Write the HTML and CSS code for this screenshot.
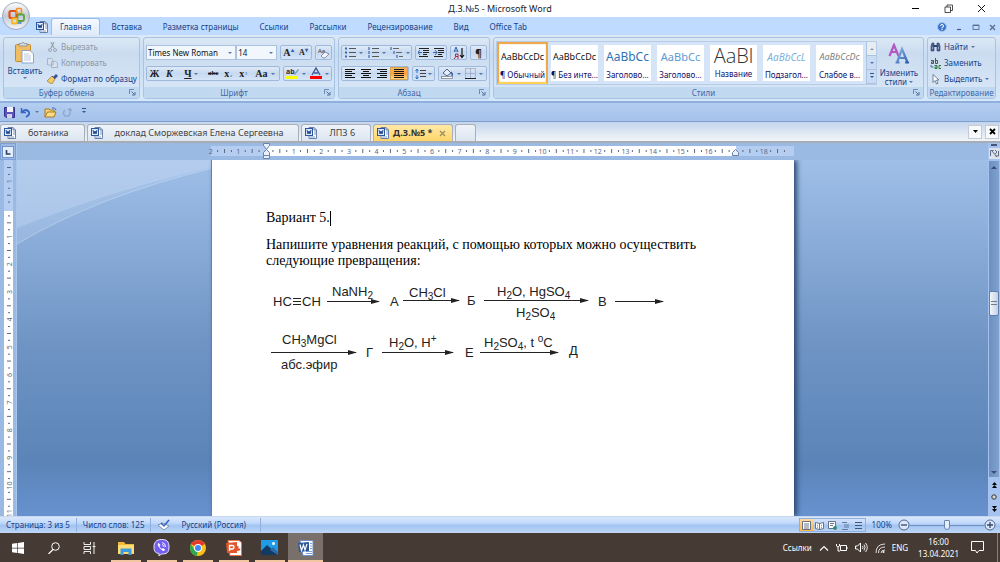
FILE: index.html
```html
<!DOCTYPE html>
<html lang="ru">
<head>
<meta charset="utf-8">
<title>Д.З.№5 - Microsoft Word</title>
<link rel="stylesheet" href="styles.css">
</head>
<body>
<svg class="defs" width="0" height="0">
  <defs>
    <linearGradient id="orb" x1="0" y1="0" x2="0" y2="1"><stop offset="0" stop-color="#fff"/><stop offset=".5" stop-color="#c3cad6"/><stop offset="1" stop-color="#f4f6fa"/></linearGradient>
    <linearGradient id="letter" x1="0" y1="0" x2="1" y2="1"><stop offset="0" stop-color="#8fb8ee"/><stop offset="1" stop-color="#2f5ca8"/></linearGradient>
  </defs>
  <symbol id="i-word" viewBox="0 0 12 12">
    <path d="M4 .5h5l2.500 2.500v8.500H4z" fill="#fff" stroke="#6a7fa8"/>
    <path d="M9 .5V3h2.500" fill="none" stroke="#6a7fa8"/>
    <path d="M9 5h2M9 7h2M5 10h5" stroke="#7c9bd0"/>
    <rect x=".5" y="1.500" width="7" height="7" fill="#dfe9fb" stroke="#2b579a"/>
    <path d="M2 3l1 4 1-3 1 3 1-4" fill="none" stroke="#1c4793"/>
  </symbol>
  <symbol id="i-launch" viewBox="0 0 7 7">
    <path d="M.5 5V.5H5" fill="none" stroke="#6c8cb8"/><path d="M2.500 2.500l3 3M6 3v3H3" fill="none" stroke="#4f719f"/>
  </symbol>
</svg>

<header class="titlebar">
  <h1>Д.З.№5 - Microsoft Word</h1>
  <div class="winbtns">
    <button aria-label="Свернуть"><svg width="9" height="9"><path d="M1 4.500h7" stroke="#000"/></svg></button>
    <button aria-label="Восстановить"><svg width="9" height="9"><path d="M1 3h5.500v5.500H1zM3 3V1h5.500v5.500h-2" fill="none" stroke="#222" stroke-width=".8"/></svg></button>
    <button aria-label="Закрыть"><svg width="9" height="9"><path d="M1 1l7 7M8 1l-7 7" stroke="#111"/></svg></button>
  </div>
</header>

<button class="orb" aria-label="Office">
  <svg viewBox="0 0 28 28">
    <circle cx="14" cy="14" r="13.500" fill="url(#orb)" stroke="#8d98ab" stroke-width=".8"/>
    <rect x="7.500" y="9" width="7" height="7" rx="1.500" fill="none" stroke="#e2501c" stroke-width="2.200"/>
    <rect x="14.500" y="6.500" width="5" height="5" rx="1" fill="none" stroke="#f0932b" stroke-width="1.600"/>
    <rect x="15.500" y="12.500" width="6.500" height="6.500" rx="1.500" fill="none" stroke="#5aa43c" stroke-width="1.800"/>
    <rect x="10" y="16.500" width="5" height="5" rx="1" fill="none" stroke="#f9b51c" stroke-width="1.800"/>
    <path d="M15.500 21h4" stroke="#3e7fc4" stroke-width="1.500"/>
  </svg>
</button>

<nav class="tabs">
  <svg class="wicon" width="12" height="12"><use href="#i-word"/></svg>
  <button class="on">Главная</button>
  <button>Вставка</button>
  <button>Разметка страницы</button>
  <button>Ссылки</button>
  <button>Рассылки</button>
  <button>Рецензирование</button>
  <button>Вид</button>
  <button>Office Tab</button>
  <div class="docbtns">
    <button aria-label="Справка"><svg width="10" height="10"><circle cx="5" cy="5" r="4.500" fill="#3b74cf" stroke="#aac4ea"/><path d="M3.500 4q0-1.500 1.500-1.500T6.500 4 5 5.500v1M5 7v1" fill="none" stroke="#fff"/></svg></button>
    <button aria-label="Свернуть окно"><svg width="7" height="8"><path d="M1 6.500h4" stroke="#44597c" stroke-width="1.200"/></svg></button>
    <button aria-label="Восстановить окно"><svg width="8" height="8"><path d="M1 2h6v4.500H1zM1 2.500h6" fill="none" stroke="#5a6c8a" stroke-width=".9"/></svg></button>
    <button aria-label="Закрыть окно"><svg width="7" height="8"><path d="M1 2l5 5M6 2L1 7" stroke="#5a6c8a" stroke-width="1.300"/></svg></button>
  </div>
</nav>

<section class="ribbon">
  <div class="group clip">
    <div class="body">
      <button class="paste">
        <svg width="22" height="24"><rect x="1.500" y="3.500" width="15" height="17" rx="1" fill="#efbd63" stroke="#c58a2c"/><path d="M5 5V2.500h2.500Q9 0 10.500 2.500H13V5z" fill="#d5d9df" stroke="#7a818c" stroke-width=".7"/><path d="M8 9.500h8l3.500 3.500v9H8z" fill="#fff" stroke="#8ea3c8"/><path d="M10 13h5M10 15h7M10 17h7M10 19h7" stroke="#a9bad8" stroke-width=".8"/></svg>
        <span>Вставить</span><i class="arr"></i>
      </button>
      <div class="side">
        <button class="dim"><svg width="11" height="10"><path d="M4 0l3 6M7 0L4 6" stroke="#98a3b3" stroke-width="1.200"/><circle cx="3" cy="8" r="1.500" fill="none" stroke="#98a3b3"/><circle cx="8" cy="8" r="1.500" fill="none" stroke="#98a3b3"/></svg>Вырезать</button>
        <button class="dim"><svg width="11" height="10"><path d="M.5.500h4L6 2v5H.5zM4.500 3.500h4L10.500 5v4.500h-6z" fill="#d7e0ee" stroke="#a6b4c9"/></svg>Копировать</button>
        <button><svg width="11" height="10"><path d="M6 3l3-3 2 2-3 3z" fill="#3c4fa0"/><path d="M0 7l5-5 3 3-3 5-2-1z" fill="#f3cd63" stroke="#8e6a20" stroke-width=".6"/><path d="M5 2l3 3" stroke="#555"/></svg>Формат по образцу</button>
      </div>
    </div>
    <footer>Буфер обмена<svg width="7" height="7"><use href="#i-launch"/></svg></footer>
  </div>

  <div class="group font">
    <div class="body rows">
      <div class="row">
        <label class="combo fname"><select aria-label="Шрифт"><option>Times New Roman</option></select><i class="arr"></i></label>
        <label class="combo fsize"><select aria-label="Размер"><option>14</option></select><i class="arr"></i></label>
        <div class="box">
          <button class="ser">A<sup>▴</sup></button><button class="ser small">A<sup>▾</sup></button>
        </div>
        <div class="box"><button aria-label="Очистить"><svg width="13" height="12"><text x="1" y="6" font-size="6" fill="#333">Aa</text><path d="M4 9l4-4 4 2-4 4H6z" fill="#f2f4fa" stroke="#6d7a99" stroke-width=".8"/></svg></button></div>
      </div>
      <div class="row">
        <div class="box bius">
          <button class="ser">Ж</button><button class="ser"><em>К</em></button><button class="ser wide"><u>Ч</u><i class="arr"></i></button><button class="ser tiny"><s>abc</s></button><button class="ser">x<sub>₂</sub></button><button class="ser">x<sub>²</sub></button><button class="ser wide">Aa<i class="arr"></i></button>
        </div>
        <div class="box colors">
          <button aria-label="Цвет выделения"><svg width="13" height="13"><text x="0" y="7" font-size="7" font-weight="700" fill="#333">ab</text><path d="M8 7l4-5 1 1-4 5z" fill="#8895b5"/><rect y="9" width="12" height="3" fill="#ff0"/></svg><i class="arr"></i></button>
          <button aria-label="Цвет текста"><svg width="12" height="13"><path d="M2 8l4-7 4 7M4 6h4" fill="none" stroke="#3c5a94" stroke-width="1.400"/><rect y="9" width="12" height="3" fill="#f00"/></svg><i class="arr"></i></button>
        </div>
      </div>
    </div>
    <footer>Шрифт<svg width="7" height="7"><use href="#i-launch"/></svg></footer>
  </div>

  <div class="group para">
    <div class="body rows">
      <div class="row">
        <div class="box lists">
          <button aria-label="Маркеры"><svg width="11" height="11"><path d="M0 1.500h2M0 5.500h2M0 9.500h2" stroke="#3a66b2" stroke-width="2"/><path d="M4 1.500h7M4 5.500h7M4 9.500h7" stroke="#555"/></svg><i class="arr"></i></button>
          <button aria-label="Нумерация"><svg width="11" height="11"><path d="M1 0v3M1 4v3M1 8v3" stroke="#3a66b2" stroke-width="1.200"/><path d="M4 1.500h7M4 5.500h7M4 9.500h7" stroke="#555"/></svg><i class="arr"></i></button>
          <button aria-label="Многоуровневый список"><svg width="13" height="12"><path d="M1 0v3M4 4v3M7 8v3" stroke="#3a66b2" stroke-width="1.200"/><path d="M3 1.500h6M6 5.500h6M9 9.500h4" stroke="#666"/></svg><i class="arr"></i></button>
        </div>
        <div class="box">
          <button aria-label="Уменьшить отступ"><svg width="12" height="11"><path d="M1 1.500h10M5 3.500h6M5 5.500h6M5 7.500h4M1 9.500h9" stroke="#222"/><path d="M0 5.500h4M2 3L0 5.500 2 8" fill="none" stroke="#3a66b2"/></svg></button>
          <button aria-label="Увеличить отступ"><svg width="12" height="11"><path d="M1 1.500h10M5 3.500h6M5 5.500h6M5 7.500h4M1 9.500h9" stroke="#222"/><path d="M0 5.500h4M2 3l2 2.500L2 8" fill="none" stroke="#3a66b2"/></svg></button>
        </div>
        <div class="box"><button aria-label="Сортировка"><svg width="12" height="12"><path d="M1 5l2-5 2 5M2 4h2" fill="none" stroke="#2f5fb0"/><path d="M5 12V7H2.500v2.500H5M3 9.500L1 12" fill="none" stroke="#a3283c"/><path d="M9 1v9M7 8l2 2.500L11 8" fill="none" stroke="#111" stroke-width="1.200"/></svg></button></div>
        <div class="box"><button class="pil">¶</button></div>
      </div>
      <div class="row">
        <div class="box aligns">
          <button aria-label="По левому краю"><svg width="12" height="11"><path d="M1 1.500h10M1 3.500h7M1 5.500h10M1 7.500h7M1 9.500h10" stroke="#111"/></svg></button>
          <button aria-label="По центру"><svg width="12" height="11"><path d="M1 1.500h10M3 3.500h6M1 5.500h10M3 7.500h6M1 9.500h10" stroke="#111"/></svg></button>
          <button aria-label="По правому краю"><svg width="12" height="11"><path d="M1 1.500h10M4 3.500h7M1 5.500h10M4 7.500h7M1 9.500h10" stroke="#111"/></svg></button>
          <button class="on" aria-label="По ширине"><svg width="12" height="11"><path d="M1 1.500h10M1 3.500h10M1 5.500h10M1 7.500h10M1 9.500h10" stroke="#111"/></svg></button>
        </div>
        <div class="box"><button class="spc" aria-label="Интервал"><svg width="11" height="12"><path d="M2 1v4M2 7v4M.5 3L2 1l1.500 2M.5 9L2 11l1.500-2" fill="none" stroke="#2f6fd0"/><path d="M5 2.500h6M5 5.500h6M5 8.500h6" stroke="#444"/></svg><i class="arr"></i></button></div>
        <div class="box colors">
          <button aria-label="Заливка"><svg width="13" height="13"><path d="M2 6l4-4 4 4-4 3z" fill="#e7eefb" stroke="#4c648f"/><path d="M10 5q2 2 1 4" fill="none" stroke="#2f5fb0" stroke-width="1.500"/><rect x=".5" y="9.500" width="11" height="2" fill="#fff" stroke="#7a8290" stroke-width=".8"/></svg><i class="arr"></i></button>
          <button aria-label="Границы"><svg width="11" height="11"><path d="M.5.500h10v10M.5.500v10M5.500.500v10M.5 5.500h10" fill="none" stroke="#8493ad" stroke-dasharray="1 1"/><path d="M0 10.500h11" stroke="#222"/></svg><i class="arr"></i></button>
        </div>
      </div>
    </div>
    <footer>Абзац<svg width="7" height="7"><use href="#i-launch"/></svg></footer>
  </div>

  <div class="group styles">
    <div class="body">
      <div class="gallery">
        <button class="on"><b class="s1">AaBbCcDc</b><span>¶ Обычный</span></button>
        <button><b class="s1">AaBbCcDc</b><span>¶ Без инте...</span></button>
        <button><b class="s2">AaBbCc</b><span>Заголово...</span></button>
        <button><b class="s3">AaBbCc</b><span>Заголово...</span></button>
        <button><b class="s4">AaBl</b><span>Название</span></button>
        <button><b class="s5">AaBbCcL</b><span>Подзагол...</span></button>
        <button><b class="s6">AaBbCcDc</b><span>Слабое в...</span></button>
        <div class="gscroll">
          <button class="off" aria-label="Вверх"><i class="arr up"></i></button>
          <button aria-label="Вниз"><i class="arr"></i></button>
          <button aria-label="Ещё"><i class="arr bar"></i></button>
        </div>
      </div>
      <button class="change">
        <svg width="22" height="21"><path d="M1.500 13L6 2l4.500 11M3 9h6" fill="none" stroke="#b357c2" stroke-width="2.200"/><path d="M9 19.500L14 6l5.500 13.500M11 15h7M7.500 19.500h4M17 19.500h4" fill="none" stroke="url(#letter)" stroke-width="2.200"/></svg>
        <span>Изменить<br>стили <i class="arr"></i></span>
      </button>
    </div>
    <footer>Стили<svg width="7" height="7"><use href="#i-launch"/></svg></footer>
  </div>

  <div class="group edit">
    <div class="body">
      <div class="side">
        <button><svg width="11" height="10"><path d="M1 9V4l1-3h2v8zM7 9V1h2l1 3v5z" fill="#49628f" stroke="#2d4270" stroke-width=".6"/><path d="M4 4h3" stroke="#2d4270" stroke-width="2"/><path d="M2 6h1M8 6h1" stroke="#dfe9f8"/></svg>Найти<i class="arr"></i></button>
        <button><svg width="11" height="11"><path d="M1 2.500h2.500v3H1.500v-1.500h2M5.500 0v5.500h2v-3h-2" fill="none" stroke="#444" stroke-width=".9"/><path d="M4.500 7.500H7v3H5v-1.500h2M11 7.500H9v3h2" fill="none" stroke="#2c7a35"/><path d="M1 7v2h2.500" fill="none" stroke="#3a66b2"/></svg>Заменить</button>
        <button><svg width="11" height="11"><path d="M3 .5v8l2-2 1.500 3.500 1.500-.7L6.500 6H9z" fill="#fff" stroke="#59667f" stroke-width=".8"/></svg>Выделить<i class="arr"></i></button>
      </div>
    </div>
    <footer>Редактирование</footer>
  </div>
</section>

<div class="qat">
  <button aria-label="Сохранить"><svg width="11" height="11"><path d="M.5.500h10v10H2L.5 9z" fill="#5a56b8" stroke="#34308a"/><path d="M3 0h6v5H3z" fill="#f0f3fb"/><path d="M3 7h5v4H3z" fill="#cdd3ea"/></svg></button>
  <button aria-label="Отменить"><svg width="11" height="11"><path d="M1.500 1v4.500h4.500" fill="none" stroke="#3765c4" stroke-width="1.500"/><path d="M2 5q4-4 7 0 1 3-3 5" fill="none" stroke="#3765c4" stroke-width="1.800"/></svg><i class="arr"></i></button>
  <button aria-label="Открыть"><svg width="13" height="11"><path d="M1 10V2h4l1 1h4v2" fill="#f5d37a" stroke="#a97a1e"/><path d="M1 10l2.500-5H12l-2 5z" fill="#fbdc88" stroke="#a97a1e"/><path d="M8 1q3-1 4 2" fill="none" stroke="#456cb5"/></svg></button>
  <button aria-label="Повторить"><svg width="10" height="11"><path d="M3 3Q0 6 3 9q5 1 5-3V2M6 3l2-1.500L9.500 4" fill="none" stroke="#8fa5c7" stroke-width="1.300"/></svg></button>
  <button aria-label="Настройка"><i class="arr bar"></i></button>
</div>

<div class="doctabs">
  <button><svg width="12" height="12"><use href="#i-word"/></svg>ботаника</button>
  <button><svg width="12" height="12"><use href="#i-word"/></svg>доклад Сморжевская Елена Сергеевна</button>
  <button><svg width="12" height="12"><use href="#i-word"/></svg>ЛПЗ 6</button>
  <button class="on"><svg width="12" height="12"><use href="#i-word"/></svg>Д.З.№5 *<svg width="7" height="7"><path d="M1 1l5 5M6 1L1 6" stroke="#9a8a62" stroke-width="1.200"/></svg></button>
  <button class="new" aria-label="Новый"></button>
  <div class="tabctl">
    <button aria-label="Список"><svg width="7" height="5"><path d="M1 1h5L3.500 4z" fill="#000"/></svg></button>
    <button aria-label="Закрыть вкладку"><svg width="7" height="7"><path d="M1 1l5 5M6 1L1 6" stroke="#000" stroke-width="1.800"/></svg></button>
  </div>
</div>

<main class="work">
  <div class="left">
    <button class="corner" aria-label="Табуляция"><svg width="12" height="12"><rect x=".5" y=".5" width="11" height="11" fill="#e5eefb" stroke="#6f93cf"/><path d="M4.500 4v4H8.500" fill="none" stroke="#2b3f66" stroke-width="1.600"/></svg></button>
    <svg class="vruler" id="vruler"></svg>
  </div>
  <div class="middle">
    <svg class="hruler" id="hruler" width="583" height="17"></svg>
    <div class="canvas">
      <svg class="swoosh" width="300" height="100"><path d="M0 68Q100 28 200 6T300-10H0z" fill="#c9dcf5" fill-opacity=".5"/><path d="M0 84Q80 36 200 7L196 6Q90 30 0 68z" fill="#c9dcf5" fill-opacity=".25"/><path d="M0 84Q80 36 200 7" fill="none" stroke="#c2d8f3" stroke-opacity=".6"/></svg>
      <article class="page">
        <p>Вариант 5.<span class="caret"></span></p>
        <p>Напишите уравнения реакций, с помощью которых можно осуществить следующие превращения:</p>
        <svg class="scheme" width="400" height="96" viewBox="0 0 400 96">
          <defs><marker id="head" markerUnits="userSpaceOnUse" markerWidth="10" markerHeight="6" refX="8" refY="3" orient="auto"><path d="M0 .5L9 3 0 5.500z"/></marker></defs>
          <g class="lines">
            <path d="M27 18.500h8M27 21.500h8M27 24.500h8"/>
            <path class="to" d="M61 21.500h52"/><path class="to" d="M137 20.500h56"/><path class="to" d="M218 20.500h104"/><path class="to" d="M349 21.500h48"/>
            <path class="to" d="M5 72.500h85"/><path class="to" d="M116 72.500h71"/><path class="to" d="M214 72.500h78"/>
          </g>
          <text x="7" y="26">HC</text><text x="36" y="26">CH</text>
          <text x="66" y="16">NaNH<tspan class="sub" dy="3">2</tspan></text>
          <text x="124" y="26">А</text>
          <text x="143" y="17">CH<tspan class="sub" dy="3">3</tspan><tspan dy="-3">Cl</tspan></text>
          <text x="201" y="25">Б</text>
          <text x="231" y="16">H<tspan class="sub" dy="3">2</tspan><tspan dy="-3">O, HgSO</tspan><tspan class="sub" dy="3">4</tspan></text>
          <text x="250" y="37">H<tspan class="sub" dy="3">2</tspan><tspan dy="-3">SO</tspan><tspan class="sub" dy="3">4</tspan></text>
          <text x="332" y="26">В</text>
          <text x="16" y="64">CH<tspan class="sub" dy="3">3</tspan><tspan dy="-3">MgCl</tspan></text>
          <text x="15" y="89">абс.эфир</text>
          <text x="100" y="77">Г</text>
          <text x="123" y="67">H<tspan class="sub" dy="3">2</tspan><tspan dy="-3">O, H</tspan><tspan class="sub" dy="-5">+</tspan></text>
          <text x="199" y="77">Е</text>
          <text x="218" y="67">H<tspan class="sub" dy="3">2</tspan><tspan dy="-3">SO</tspan><tspan class="sub" dy="3">4</tspan><tspan dy="-3">, t </tspan><tspan class="sub" dy="-5">o</tspan><tspan dy="5">C</tspan></text>
          <text x="303" y="75">Д</text>
        </svg>
      </article>
    </div>
  </div>
  <div class="scroll">
    <i class="split"></i>
    <button aria-label="Линейка"><svg width="11" height="11"><rect x="0" y="0" width="11" height="11" fill="#dce2ea"/><path d="M1.500 8V2.500h3M9.500 3v5h-3M3 3l5 6M6 2l2 2-2 2" fill="none" stroke="#626a86"/></svg></button>
    <div class="track">
      <i class="arr up"></i>
      <div class="before"></div>
      <div class="thumb"></div>
      <div class="after"></div>
      <i class="arr"></i>
    </div>
    <div class="jump">
      <button aria-label="Предыдущая"><svg width="5" height="6"><path d="M0 3l2.500-3L5 3zM0 6l2.500-3L5 6z"/></svg></button>
      <button aria-label="Объект"><svg width="6" height="6"><circle cx="3" cy="3" r="2.200" fill="#d8d8d8" stroke="#333"/></svg></button>
      <button aria-label="Следующая"><svg width="5" height="6"><path d="M0 0l2.500 3L5 0zM0 3l2.500 3L5 3z"/></svg></button>
    </div>
  </div>
</main>

<div class="status">
  <span>Страница: 3 из 5</span>
  <span>Число слов: 125</span>
  <span class="lang"><svg width="13" height="12"><path d="M1 6l5-2 6 3-5 4z" fill="#fff" stroke="#6b7a99" stroke-width=".8"/><path d="M4 4l3 3 5-6" fill="none" stroke="#2f62c0" stroke-width="1.500"/></svg>Русский (Россия)</span>
  <div class="views">
    <button class="on" aria-label="Разметка"><svg width="9" height="9"><path d="M.5.500h8v8h-8zM2 3h5M2 5h5M2 7h5" fill="#fff" stroke="#5a6478" stroke-width=".9"/></svg></button>
    <button aria-label="Чтение"><svg width="9" height="9"><path d="M.5 1.500l4 1 4-1v6l-4 1-4-1zM4.500 2.500v6M2 4l1 .5M2 6l1 .5M6 4.500L7 4M6 6.500L7 6" fill="#fff" stroke="#4b556c" stroke-width=".8"/></svg></button>
    <button aria-label="Веб"><svg width="9" height="9"><path d="M.5.500h7v7h-7zM2 2.500h4M2 4.500h3" fill="#fff" stroke="#5a6478" stroke-width=".9"/><circle cx="7" cy="7" r="2" fill="#31906f"/></svg></button>
    <button aria-label="Структура"><svg width="9" height="9"><path d="M1 1.500h5M3 4h5M3 6h5M1 8.500h6" stroke="#5a6f98" stroke-width=".9"/></svg></button>
    <button aria-label="Черновик"><svg width="9" height="9"><path d="M1 1.500h7M1 4.500h7M1 7.500h7" stroke="#44557a"/></svg></button>
  </div>
  <span class="pct">100%</span>
  <div class="zoom">
    <button aria-label="Меньше"><svg width="12" height="12"><circle cx="6" cy="6" r="5" fill="#dce8fa" stroke="#51678f"/><path d="M3 6h6" stroke="#33456a" stroke-width="1.300"/></svg></button>
    <input type="range" min="0" max="100" value="50" aria-label="Масштаб">
    <button aria-label="Больше"><svg width="12" height="12"><circle cx="6" cy="6" r="5" fill="#dce8fa" stroke="#51678f"/><path d="M3 6h6M6 3v6" stroke="#33456a" stroke-width="1.300"/></svg></button>
  </div>
</div>

<div class="taskbar">
  <button aria-label="Пуск"><svg width="12" height="12"><path d="M0 1.800L5.300 1v4.700H0zM6 .9L12 0v5.700H6zM0 6.400h5.300v4.700L0 10.300zM6 6.400h6V12l-6-.9z" fill="#fff"/></svg></button>
  <button aria-label="Поиск"><svg width="12" height="12"><circle cx="7.500" cy="4.500" r="3.800" fill="none" stroke="#fff"/><path d="M5 7.500L.5 12" stroke="#fff" stroke-width="1.200"/></svg></button>
  <button aria-label="Задачи"><svg width="13" height="12"><path d="M1 0v2.500h6.500V0M1 12V9.500h6.500V12M1 4.500h6.500v3H1zM11 0v12M9.500 4.500h3" fill="none" stroke="#eee"/></svg></button>
  <button class="run" aria-label="Проводник"><svg width="16" height="14"><path d="M0 1h6l1.500 2H16v10H0z" fill="#f3b93c"/><path d="M0 4h16v9H0z" fill="#fcdc74"/><path d="M2.500 14V7.500h11V14h-3v-3h-5v3z" fill="#3f9be0"/></svg></button>
  <button class="run" aria-label="Viber"><svg width="17" height="17"><path d="M8.500.500c5 0 7.500 1.500 7.500 7.500s-2.500 7-7.500 7L6 17v-2.500C2.500 14 1 12.500 1 8S3 .5 8.500.500z" fill="#7360f2" stroke="#e9e6ff"/><path d="M5.500 4q-1.500 1 0 3.500T10 12q1.500 0 2-1.500L10 9l-1 1Q7 9 6.500 7l1-1z" fill="#fff"/><path d="M9 3.500Q12.500 4 12.500 8M9 5.500Q11 6 11 8" fill="none" stroke="#fff" stroke-width=".9"/></svg></button>
  <button class="run" aria-label="Chrome"><svg width="16" height="16"><circle cx="8" cy="8" r="8" fill="#fbc116"/><path d="M8 8L1.100 4A8 8 0 0 1 14.900 4z" fill="#e33b2e"/><path d="M1.100 4L4.500 10l3 1L7 16A8 8 0 0 1 1.100 4z" fill="#2da94f"/><circle cx="8" cy="8" r="3.900" fill="#fff"/><circle cx="8" cy="8" r="3" fill="#4285f4"/></svg></button>
  <button class="run" aria-label="PowerPoint"><svg width="18" height="16"><path d="M3 .5h11l2.500 2v13H5z" fill="#fff" stroke="#e8744a"/><path d="M1 3l11-1v11L2 13z" fill="#e0552b"/><path d="M4.500 11V5.500h3q1.500 0 1.500 1.600T7.500 9h-3" fill="none" stroke="#fff" stroke-width="1.400"/><path d="M13.500 6a2.500 2.500 0 1 0 2 2.500h-2z" fill="#e0552b"/></svg></button>
  <button class="run" aria-label="Фотографии"><svg width="17" height="15"><path d="M0 0h17v15H0z" fill="#1f9be8"/><path d="M0 11l6-6 11 10H0z" fill="#123a63"/><path d="M9 10l3-3 5 5v3z" fill="#2b6da8"/><circle cx="12.500" cy="3.500" r="1.500" fill="#fff"/></svg></button>
  <button class="run on" aria-label="Word"><svg width="18" height="16"><path d="M3 .5h13v15H6z" fill="#fff" stroke="#6f8fca"/><path d="M13 3.500h2M13 6h2M13 8.500h2M9 13.500h6M9 11.500h6" stroke="#7fa0d8"/><path d="M1 3l11-1v9L2 12z" fill="#2b579a"/><path d="M3 4.500l1.500 6L6.500 5l1.500 5 2-6" fill="none" stroke="#fff" stroke-width="1.200"/></svg></button>
  <div class="tray">
    <span>Ссылки</span>
    <svg width="10" height="8"><path d="M1 6.500l4-4 4 4" fill="none" stroke="#fff" stroke-width="1.100"/></svg>
    <svg width="12" height="10"><path d="M4.500 2.500h6v5h-6zM11 4v2" fill="none" stroke="#fff"/><path d="M.5 1v2q1.500 2 3 0V1M2 4v4h2" fill="none" stroke="#fff"/></svg>
    <svg width="13" height="11"><path d="M.5 4h2L5.500 1v9l-3-3h-2z" fill="none" stroke="#fff"/><path d="M7.500 4q1 1.500 0 3M9 2.500q2 3 0 6M10.500 1q3.500 4.500 0 9" fill="none" stroke="#fff" stroke-width=".9"/></svg>
    <svg width="10" height="10"><path d="M1 10Q1 1 10 1M3.500 10Q3.500 4 10 4M6 10Q6 7 10 7" fill="none" stroke="#ddd"/><circle cx="8.500" cy="9" r="1" fill="#fff"/></svg>
    <span>ENG</span>
    <time>16:00<br>13.04.2021</time>
    <svg width="13" height="13"><path d="M.5.500h12v9H8L6 12 4.500 9.500h-4z" fill="none" stroke="#fff"/></svg>
  </div>
</div>

<script>
// one centimetre on the rulers, in px
const cm = 27.65;

const drawRuler = (svg, from, to, zero, vertical) => {
    let out = '';
    for (let q = from * 4; q <= to * 4; q++) {
        const p = zero + (q / 4) * cm;
        const pos = vertical ? `translate(5 ${p}) rotate(-90)` : `translate(${p} 8)`;
        if (q === 0) continue;
        if (q % 4 === 0) {
            if (!vertical && q / 4 === 17) continue;
            out += `<text transform="${pos}" y="3" text-anchor="middle">${Math.abs(q / 4)}</text>`;
        } else if (q % 2 === 0) {
            out += `<path transform="${pos}" d="M0-2v4"/>`;
        } else {
            out += `<path transform="${pos}" d="M0-1v2"/>`;
        }
    }
    svg.innerHTML += out;
};

const hruler = document.querySelector('#hruler');
hruler.innerHTML = '<rect class="margin" x="0" y="3" width="583" height="10"/><rect class="paper" x="55" y="3" width="470" height="10"/>';
drawRuler(hruler, -2, 18.75, 55, false);
hruler.innerHTML += '<g class="mark"><path d="M52.500.500h6v2l-3 4-3-4z"/><path d="M52.500 12.500v-3l3-3 3 3v3z"/><path d="M52.500 12.500h6v3h-6z"/><path d="M521.500 12.500v-3l3-3 3 3v3z"/></g>';

const vruler = document.querySelector('#vruler');
const vcm = Math.floor((vruler.clientHeight - 49) / cm);
vruler.innerHTML = '<rect class="margin" x="0" y="0" width="9" height="51"/><rect class="paper" x="0" y="51" width="9" height="2000"/>';
drawRuler(vruler, -1.5, vcm, 49, true);
</script>
</body>
</html>
```
FILE: styles.css
```css
* {
    box-sizing: border-box;
}

body {
    margin: 0;
    height: 100vh;
    display: flex;
    flex-direction: column;
    overflow: hidden;
    position: relative;
    font: 8px/12px "Noto Sans", sans-serif;
    color: #15428b;
    background: #fff;
}

button {
    margin: 0;
    padding: 0;
    border: 0;
    background: none;
    font: inherit;
    color: inherit;
    display: flex;
    align-items: center;
    justify-content: center;
    white-space: nowrap;
}

svg {
    flex: none;
    display: block;
}

.defs {
    position: absolute;
}

/* small drop-down triangle */
.arr {
    flex: none;
    display: inline-block;
    border: 2px solid transparent;
    border-top-color: #5577a8;
    border-bottom-width: 0;
}

.arr.up {
    border: 2px solid transparent;
    border-bottom-color: #8b99ad;
    border-top-width: 0;
}

/* the same with a line above it */
.arr.bar {
    border-top-color: #35538a;
    position: relative;
}

.arr.bar::before {
    content: "";
    position: absolute;
    left: -2px;
    top: -5px;
    width: 4px;
    height: 1px;
    background: #35538a;
}

/* title */
.titlebar {
    height: 17px;
    flex: none;
    display: flex;
    align-items: center;
    justify-content: center;
}

h1 {
    margin: 0;
    font-size: 9px;
    font-weight: 400;
    color: #222;
}

.winbtns {
    position: absolute;
    right: 14px;
    top: 4px;
    display: flex;
    gap: 24px;
}

.orb {
    position: absolute;
    left: 2px;
    top: 2px;
    z-index: 2;
}

.orb svg {
    width: 28px;
    height: 28px;
}

/* ribbon tabs */
.tabs {
    height: 18px;
    flex: none;
    display: flex;
    align-items: stretch;
    background: #bfdbff;
    padding: 1px 4px 0 36px;
}

.tabs .wicon {
    align-self: center;
    margin-right: 3px;
}

.tabs > button {
    padding: 0 10px 0 11px;
}

.tabs > .on {
    padding: 0 8px;
    border: 1px solid #9cbde9;
    border-bottom: 0;
    border-radius: 3px 3px 0 0;
    background: linear-gradient(#f5f9ff, #dfeafa);
}

.docbtns {
    margin-left: auto;
    display: flex;
    align-items: center;
    gap: 9px;
}

/* ribbon */
.ribbon {
    flex: none;
    display: flex;
    gap: 3px;
    padding: 2px 4px 2px 3px;
    background: linear-gradient(#dce8f7, #c7dbf3 30%, #d5e8fb);
    border-bottom: 2px solid #8fb0dc;
}

.group {
    flex: none;
    display: flex;
    flex-direction: column;
    border: 1px solid #a9c3e3;
    border-radius: 3px;
    background: linear-gradient(#dce8f5, #cbdcf0 25%, #d9e8f8);
    overflow: hidden;
}

.group .body {
    height: 49px;
    display: flex;
    padding: 3px 2px 0;
}

.group footer {
    height: 11px;
    line-height: 11px;
    display: flex;
    align-items: center;
    justify-content: center;
    position: relative;
    padding-right: 10px;
    background: #c1d8f1;
    color: #3f6ba8;
}

.group footer svg {
    position: absolute;
    right: 3px;
    top: 2px;
}

.clip {
    width: 137px;
}

.font {
    width: 192px;
}

.para {
    width: 152px;
}

.styles {
    flex: 1;
    min-width: 0;
}

.edit {
    width: 69px;
}

.group.edit footer {
    padding: 0;
}

.group .paste {
    flex-direction: column;
    justify-content: flex-start;
    width: 38px;
}

.side {
    display: flex;
    flex-direction: column;
    align-items: flex-start;
    justify-content: space-between;
    height: 44px;
}

.clip .side {
    margin-left: 3px;
}

.side button {
    gap: 3px;
    height: 12px;
}

.dim {
    color: #8d97a6;
}

.group .rows {
    flex-direction: column;
    gap: 6px;
    padding-top: 7px;
}

.row {
    display: flex;
    gap: 3px;
}

.combo {
    display: flex;
    align-items: center;
    position: relative;
    height: 15px;
    border: 1px solid #abc1de;
    background: #f2f7fd;
}

.combo + .combo {
    margin-left: -3px;
}

.combo select {
    appearance: none;
    width: 100%;
    border: 0;
    padding: 0 1px;
    background: none;
    font: inherit;
    color: #111;
}

.combo .arr {
    position: absolute;
    right: 3px;
}

.fname {
    width: 91px;
}

.fsize {
    width: 41px;
}

.box {
    display: flex;
    height: 15px;
    border: 1px solid #9fb9dc;
    border-radius: 2px;
    background: linear-gradient(#dfeaf8, #c6d9f0 50%, #d5e5f8);
    color: #222;
}

.box button {
    min-width: 15px;
    flex: 1;
    gap: 3px;
}

.box .ser {
    font: bold 10px/13px "Liberation Serif", serif;
}

.box .small {
    font-size: 8px;
}

.box .tiny {
    font-size: 7px;
}

.box .wide {
    flex: 1 1 24px;
}

.ser sup,
.ser sub {
    font-size: 6px;
    line-height: 6px;
    color: #2a5aa8;
}

.ser sub {
    margin-left: -2px;
}

.ser sup {
    margin: -6px 0 0 -3px;
}

.bius {
    width: 135px;
}

.colors {
    width: 49px;
}

.lists {
    width: 73px;
}

.aligns {
    width: 69px;
}

.box .spc {
    width: 21px;
    gap: 2px;
}

.box .pil {
    font-size: 10px;
    font-weight: 700;
}

.aligns .on {
    border: 1px solid #d8a24a;
    background: linear-gradient(#f6b867, #ff9f38 50%, #ffd98a);
}

/* style gallery */
.gallery {
    display: flex;
    flex: 1;
    min-width: 0;
    height: 44px;
    border: 1px solid #b5cbe8;
    background: #d5e5f7;
}

.gallery > button {
    flex: 1;
    min-width: 0;
    flex-direction: column;
    margin: 3px;
    padding-bottom: 1px;
    background: #fff;
    color: #0e0e6b;
    justify-content: space-between;
}

.gallery > .on {
    flex-grow: 1;
    margin: 0;
    padding: 1px 0 2px;
    border: 2px solid #f0a94a;
    border-bottom-color: #ffd257;
    box-shadow: inset 0 0 1px #c78a36;
}

.gallery b {
    font-weight: 400;
    height: 24px;
    line-height: 24px;
    color: #111;
}

.gallery .s1 {
    font-size: 9px;
}

.gallery .s2 {
    font-size: 12px;
    color: #2e74b5;
}

.gallery .s3 {
    font-size: 11px;
    color: #5b9bd5;
}

.gallery .s4 {
    font: 300 20px/22px "Open Sans", sans-serif;
    color: #333;
}

.gallery .s5 {
    font-size: 10px;
    font-style: italic;
    color: #7fb0de;
}

.gallery .s6 {
    font-size: 9px;
    font-style: italic;
    color: #808080;
}

.gscroll {
    width: 10px;
    display: flex;
    flex-direction: column;
    border-left: 1px solid #a9c3e3;
}

.gscroll button {
    flex: 1;
    border-bottom: 1px solid #a9c3e3;
    background: #c9dcf4;
}

.gscroll .off {
    background: #e8edf2;
}

.group .change {
    width: 44px;
    flex-direction: column;
    line-height: 9px;
    gap: 4px;
}

.change .arr {
    vertical-align: middle;
}

/* quick access */
.qat {
    height: 19px;
    flex: none;
    display: flex;
    align-items: center;
    gap: 5px;
    padding-left: 4px;
    background: linear-gradient(#b4cdf0, #a5c2ea);
    border-bottom: 1px solid #7e9fce;
}

.qat button {
    gap: 4px;
}

.qat button:last-child {
    margin-left: 5px;
}

/* document tabs */
.doctabs {
    height: 21px;
    flex: none;
    display: flex;
    align-items: flex-end;
    gap: 2px;
    padding-right: 1px;
    background: linear-gradient(#c3d5ec, #f2f5f9);
    border-bottom: 2px solid #a8adb5;
    font-size: 9px;
    color: #444;
}

.doctabs > button {
    height: 17px;
    padding: 0 15px 0 3px;
    gap: 12px;
    border: 1px solid #a9b0ba;
    border-bottom: 0;
    border-radius: 3px 3px 0 0;
    background: linear-gradient(#eef3f9, #dde6f0);
}

.doctabs > .on {
    padding-right: 6px;
    gap: 4px;
    font-weight: 700;
    color: #333;
    background: linear-gradient(#ffe9a8, #ffd568);
}

.doctabs .on svg + svg {
    margin-left: 3px;
}

.doctabs > .new {
    width: 21px;
    padding: 0;
}

.tabctl {
    margin-left: auto;
    display: flex;
    gap: 3px;
    align-self: center;
}

.tabctl button {
    width: 14px;
    height: 14px;
    border: 1px solid #c5cbd3;
    background: #f7f9fb;
}

/* work area */
.work {
    flex: 1;
    min-height: 0;
    display: flex;
    background: #9bbae3;
}

.left {
    width: 17px;
    flex: none;
    display: flex;
    flex-direction: column;
    border-right: 1px solid #a9c6ec;
}

.corner {
    height: 17px;
    flex: none;
    border: 1px solid #7d9fd4;
}

.vruler {
    flex: 1;
    min-height: 0;
    width: 9px;
    margin-left: 4px;
}

.hruler {
    overflow: visible;
}

.hruler text,
.vruler text {
    font-size: 7px;
    fill: #5c6a80;
}

.hruler path,
.vruler path {
    stroke: #5c6a80;
}

.margin {
    fill: #b5cdf0;
}

.paper {
    fill: #fff;
}

.hruler .mark path {
    fill: #e9f0fb;
    stroke: #6a83ab;
}

.middle {
    flex: 1;
    min-width: 0;
    display: flex;
    flex-direction: column;
    align-items: center;
}

.canvas {
    align-self: stretch;
    flex: 1;
    min-height: 0;
    display: flex;
    justify-content: center;
    position: relative;
    overflow: hidden;
    background: linear-gradient(#9fbfe8, #6f94c4 52%, #5b84b8 85%, #6792cf);
}

.swoosh {
    position: absolute;
    left: 0;
    top: 0;
}

.page {
    width: 583px;
    position: relative;
    padding: 50px 55px 0 54px;
    background: #fff;
    border-left: 1px solid #6d7f9a;
    box-shadow: 3px 0 5px #2e4a73;
    font: 14px/16px "Liberation Serif", serif;
    color: #000;
}

.page p {
    margin: 0 0 11px;
    max-width: 440px;
}

.caret {
    display: inline-block;
    height: 15px;
    border-left: 1px solid #000;
    vertical-align: middle;
}

.scheme text {
    font: 13px "Liberation Sans", sans-serif;
    fill: #222;
}

.scheme .sub {
    font-size: 10px;
}

.lines {
    fill: none;
    stroke: #222;
}

.to {
    marker-end: url(#head);
}

marker path {
    fill: #222;
    stroke: none;
}

/* vertical scroll bar */
.scroll {
    width: 12px;
    flex: none;
    display: flex;
    flex-direction: column;
    align-items: center;
    gap: 2px;
    padding-top: 1px;
    background: #a5c3ee;
}

.split {
    width: 6px;
    height: 2px;
    background: #44557a;
}

.track {
    flex: 1;
    width: 10px;
    display: flex;
    flex-direction: column;
    align-items: center;
    padding: 5px 0 3px;
    background: linear-gradient(90deg, #6c8fbf, #7fa2d0);
}

.track .arr {
    border-width: 3px;
    border-top-color: #3c4c78;
    border-bottom-width: 0;
}

.track .up {
    border-top-width: 0;
    border-bottom: 3px solid #3c4c78;
}

.before {
    flex: 44;
}

.after {
    flex: 56;
}

.thumb {
    width: 10px;
    height: 25px;
    border: 1px solid #5f7db0;
    border-radius: 2px;
    background: linear-gradient(#707b8c, #707b8c) center 9px / 6px 1px no-repeat, linear-gradient(#707b8c, #707b8c) center 12px / 6px 1px no-repeat, linear-gradient(90deg, #f3f6fa, #c4d0e2);
}

.jump {
    display: flex;
    flex-direction: column;
    align-items: center;
    gap: 6px;
    padding: 3px 0 4px;
}

/* status bar */
.status {
    height: 17px;
    flex: none;
    display: flex;
    align-items: center;
    padding-right: 4px;
    background: linear-gradient(#d9e7fb, #c3dafb 35%, #a2c3f1 55%, #c0d8f8);
    border-top: 1px solid #c6d7ee;
}

.status > span {
    height: 14px;
    line-height: 14px;
    padding: 0 6px;
    border-right: 1px solid #8fb0de;
}

.status .lang {
    display: flex;
    align-items: center;
    gap: 11px;
    padding-right: 14px;
}

.views {
    display: flex;
    margin-left: auto;
    border: 1px solid #8fb0de;
}

.views button {
    width: 13px;
    height: 12px;
}

.views .on {
    background: linear-gradient(#ffd9a0, #ffb64d);
}

.status .pct {
    border: 0;
}

.zoom {
    display: flex;
    align-items: center;
}

.zoom input {
    appearance: none;
    width: 74px;
    height: 12px;
    margin: 0;
    background: linear-gradient(#6f8fc0, #6f8fc0) center / 100% 1px no-repeat;
}

.zoom input::-webkit-slider-thumb {
    appearance: none;
    width: 6px;
    height: 10px;
    border: 1px solid #6a83ab;
    border-radius: 1px 1px 3px 3px;
    background: #e4edfa;
}

/* windows task bar */
.taskbar {
    height: 29px;
    flex: none;
    display: flex;
    background: #463a34;
    color: #fff;
}

.taskbar > button {
    width: 35px;
    margin-right: 1px;
}

.taskbar .run {
    background: linear-gradient(#f2c6a0, #f2c6a0) center bottom / 30px 2px no-repeat;
}

.taskbar .on {
    background: linear-gradient(#f2c6a0, #f2c6a0) center bottom / 100% 2px no-repeat, #7a706b;
}

.tray {
    margin-left: auto;
    display: flex;
    align-items: center;
    gap: 7px;
    padding-right: 13px;
    margin-right: 2px;
    border-right: 1px solid #8a807b;
}

.tray time {
    text-align: center;
    margin: 0 5px 0 3px;
}
```
